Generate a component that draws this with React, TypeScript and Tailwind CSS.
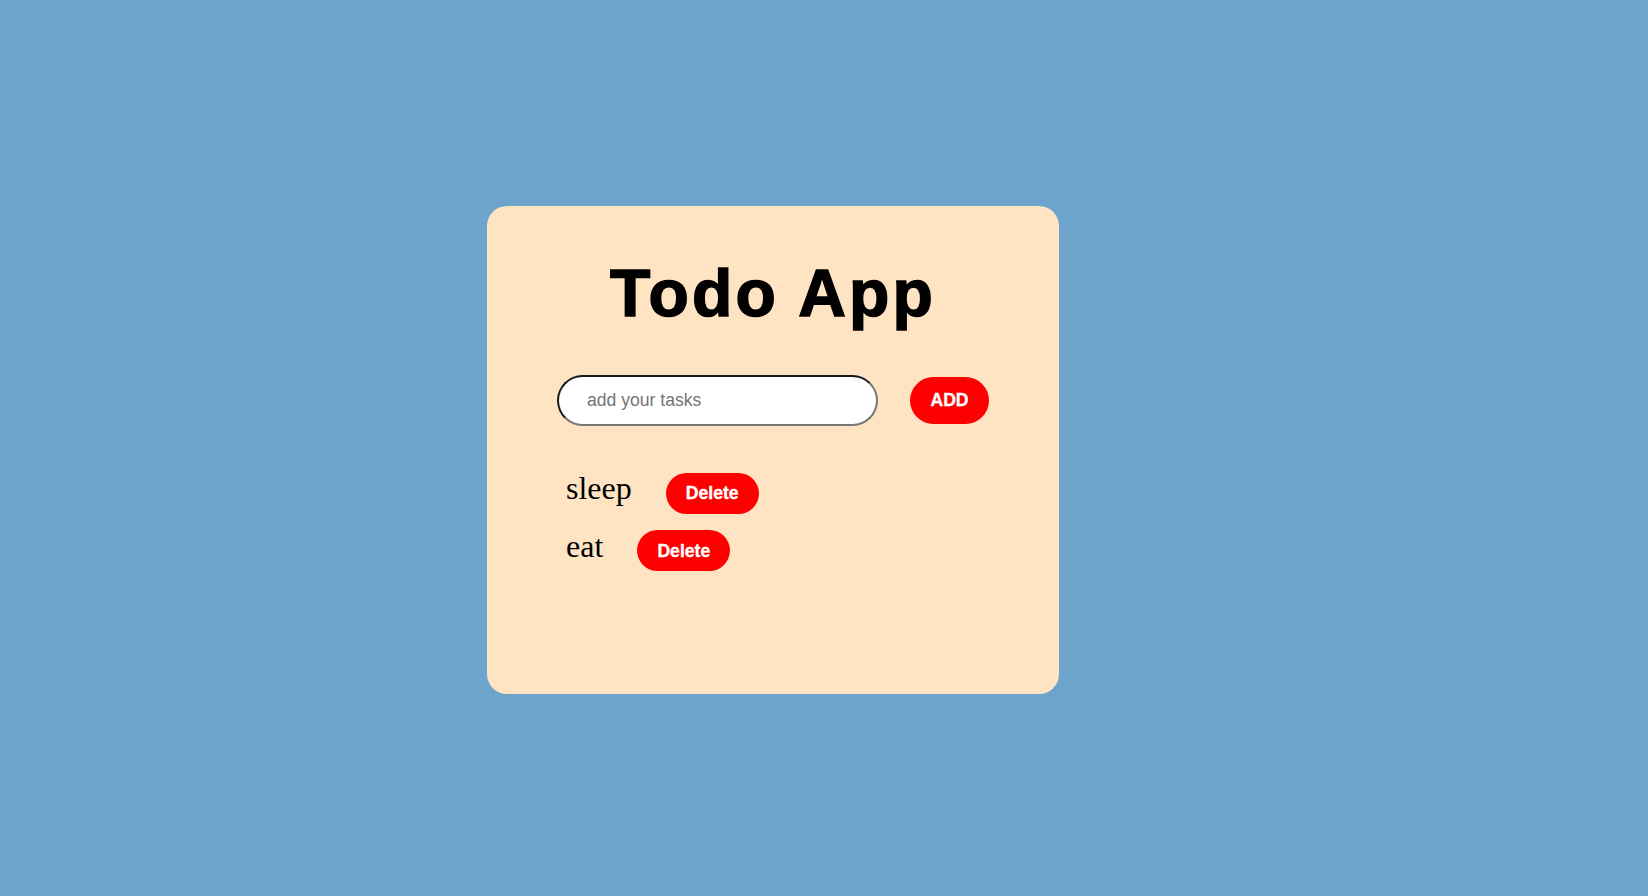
export default function App() {
  const sans = "font-['Liberation_Sans',Arial,sans-serif]";
  const tasks = ["sleep", "eat"];
  return (
    <div className="min-h-screen w-full bg-[#6ca4cc] pl-[487px] pt-[206px]">
      <div className="flex h-[488px] w-[572px] flex-col rounded-[20px] bg-[#ffe4c4] pt-[54px]">
        <h1 className={`${sans} text-center text-[66px] font-bold leading-none tracking-[3.2px] text-black [-webkit-text-stroke:1.5px_black]`}>Todo App</h1>
        <div className="ml-[70px] mt-[49px] flex items-center gap-[32px]">
          <input
            type="text"
            placeholder="add your tasks"
            className={`${sans} h-[51px] w-[321px] rounded-full border-2 border-t-[#1a1a1a] border-l-[#1a1a1a] border-b-[#767676] border-r-[#767676] bg-white pl-[28px] text-[17.6px] text-black outline-none placeholder:text-[#757575]`}
          />
          <button className={`${sans} h-[47px] w-[79px] rounded-full bg-[#ff0000] text-[17.6px] font-bold text-white [-webkit-text-stroke:0.3px_white]`}>ADD</button>
        </div>
        <ul className="ml-[79px] mt-[38px] flex flex-col gap-[8px]">
          {tasks.map((t) => (
            <li key={t} className="flex items-baseline">
              <span className="font-['Liberation_Serif','Times_New_Roman',serif] text-[32px] text-black">{t}</span>
              <button className={`${sans} ml-[34px] h-[41px] w-[93px] rounded-full bg-[#ff0000] text-[17.6px] font-bold text-white [-webkit-text-stroke:0.3px_white]`}>Delete</button>
            </li>
          ))}
        </ul>
      </div>
    </div>
  );
}
